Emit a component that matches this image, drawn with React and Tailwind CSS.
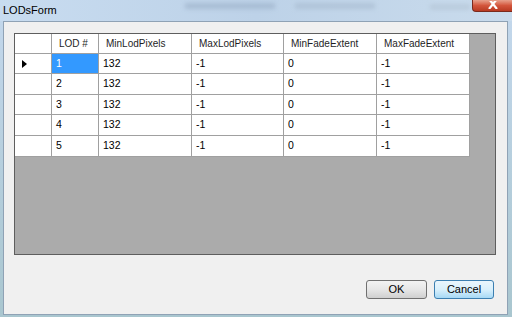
import React from "react";

const columns = [
  { name: "LOD #", w: "w-[47px]" },
  { name: "MinLodPixels", w: "w-[93px]" },
  { name: "MaxLodPixels", w: "w-[92px]" },
  { name: "MinFadeExtent", w: "w-[93px]" },
  { name: "MaxFadeExtent", w: "w-[93px]" },
];

const rows = [
  { cells: ["1", "132", "-1", "0", "-1"], h: "h-[20px]" },
  { cells: ["2", "132", "-1", "0", "-1"], h: "h-[21px]" },
  { cells: ["3", "132", "-1", "0", "-1"], h: "h-[20px]" },
  { cells: ["4", "132", "-1", "0", "-1"], h: "h-[21px]" },
  { cells: ["5", "132", "-1", "0", "-1"], h: "h-[21px]" },
];

const font = { fontFamily: '"Liberation Sans", Arial, sans-serif' };

const App = () => {
  return (
    <div
      className="w-[512px] h-[317px] flex flex-col overflow-hidden bg-gradient-to-b from-[#c4d8ed] to-[#a9c6cf]"
      style={font}
    >
      {/* Title bar */}
      <div className="h-[21px] shrink-0 flex items-start relative bg-gradient-to-r from-[#c8dcf0] via-[#bdd2e8] to-[#c9dbec]">
        <span className="pl-[3px] pt-[3px] text-[11px] text-black leading-[14px]">LODsForm</span>
        {/* blurred background content behind glass */}
        <div className="absolute left-[185px] top-[3px] w-[90px] h-[6px] bg-[#9fb4cc] blur-[2px] opacity-70" />
        <div className="absolute left-[295px] top-[3px] w-[80px] h-[6px] bg-[#a6b9ce] blur-[2px] opacity-60" />
        <div className="absolute left-[430px] top-[4px] w-[40px] h-[6px] bg-[#b2c3d4] blur-[2px] opacity-60" />
        <div className="absolute right-0 top-0 w-[40px] h-[12px] rounded-bl-[4px] border border-t-0 border-r-0 border-[#7b2a1d] bg-gradient-to-b from-[#e7a08c] via-[#d3553c] to-[#b83a22] flex items-start justify-center">
          <svg width="10" height="8" viewBox="0 0 10 8" className="mt-[1px]">
            <path d="M1 -2 L9 8 M9 -2 L1 8" stroke="#fff" strokeWidth="2.2" />
          </svg>
        </div>
      </div>

      {/* Client area */}
      <div className="ml-[3px] mr-[4px] h-[294px] shrink-0 border border-[#8fa2b5] bg-[#f0f0f0] flex flex-col pt-[11px] pl-[10px] pr-[12px]">
        {/* DataGridView */}
        <div className="w-[482px] h-[222px] border border-[#5e5e5e] bg-[#ababab] flex flex-col">
          {/* Header */}
          <div className="flex h-[20px] shrink-0">
            <div className="w-[37px] h-full bg-white border-r border-b border-[#a0a0a0]" />
            {columns.map((c) => (
              <div
                key={c.name}
                className={`${c.w} h-full bg-white border-r border-b border-[#a0a0a0] pl-[7px] flex items-center text-[10px] text-[#1e1e1e]`}
              >
                {c.name}
              </div>
            ))}
          </div>
          {rows.map((r, i) => (
            <div key={i} className={`flex ${r.h} shrink-0`}>
              <div className="w-[37px] h-full bg-white border-r border-b border-[#a0a0a0] flex items-center pl-[7px]">
                {i === 0 && (
                  <svg width="5" height="8" viewBox="0 0 5 8">
                    <path d="M0 0 L5 4 L0 8 Z" fill="#000" />
                  </svg>
                )}
              </div>
              {r.cells.map((v, j) => (
                <div
                  key={j}
                  className={`${columns[j].w} h-full border-r border-b border-[#a0a0a0] flex items-center pl-[4px] text-[10.5px] ${
                    i === 0 && j === 0 ? "bg-[#3399ff] text-white" : "bg-white text-black"
                  }`}
                >
                  {v}
                </div>
              ))}
            </div>
          ))}
        </div>

        {/* Buttons */}
        <div className="flex justify-end gap-[7px] mt-[25px] pr-[1px]">
          <button className="w-[61px] h-[19px] rounded-[3px] border border-[#707070] bg-gradient-to-b from-[#f3f3f3] via-[#e6e6e6] to-[#d0d0d0] text-[11px] text-black leading-none">
            OK
          </button>
          <button className="w-[60px] h-[19px] rounded-[3px] border border-[#3c7fb1] bg-gradient-to-b from-[#eaf6fd] via-[#d9f0fc] to-[#a7d9f5] text-[11px] text-black leading-none">
            Cancel
          </button>
        </div>
      </div>
    </div>
  );
};

export default App;
